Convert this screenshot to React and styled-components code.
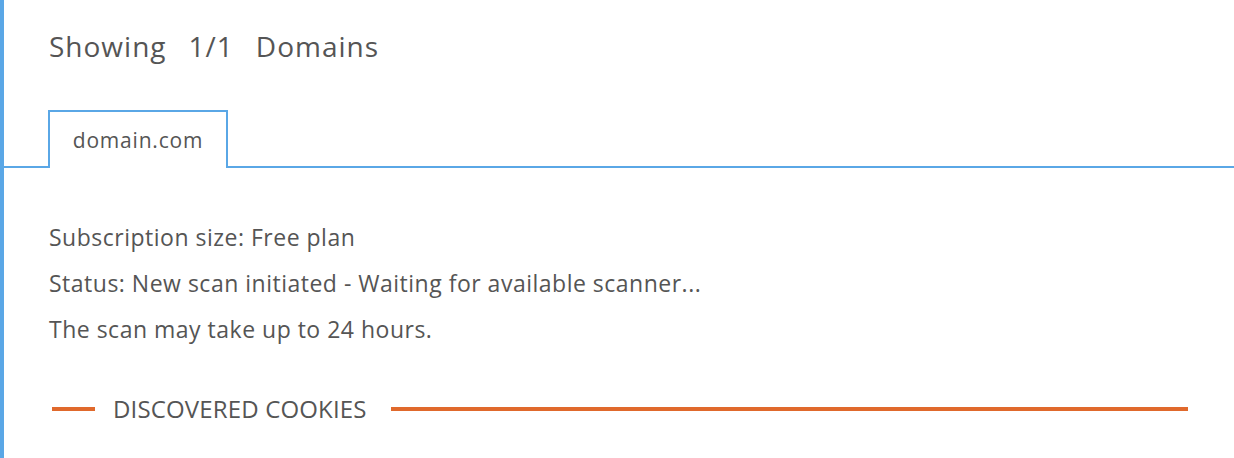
import React from 'react'
import styled, { createGlobalStyle } from 'styled-components'

const colors = {
  blue: '#5aa7e6',
  orange: '#e0692c',
  text: '#555555',
}

const GlobalStyle = createGlobalStyle`
  html, body {
    margin: 0;
    padding: 0;
    background: #ffffff;
  }
  body {
    font-family: 'Open Sans', 'Noto Sans', sans-serif;
    color: ${colors.text};
  }
`

const Page = styled.div`
  border-left: 4px solid ${colors.blue};
  min-height: 458px;
  box-sizing: border-box;
`

const Heading = styled.h2`
  margin: 0;
  padding: 25px 0 0 45px;
  font-size: 28px;
  font-weight: 400;
  letter-spacing: 1px;
  line-height: 42px;
  display: flex;
  gap: 22px;
`

const TabBar = styled.div`
  display: flex;
  margin-top: 43px;
  padding-left: 44px;
  border-bottom: 2px solid ${colors.blue};
`

const Tab = styled.div`
  width: 180px;
  height: 58px;
  box-sizing: border-box;
  border: 2px solid ${colors.blue};
  border-bottom: none;
  margin-bottom: -2px;
  background: #fff;
  display: flex;
  align-items: center;
  justify-content: center;
  font-size: 21px;
  letter-spacing: 0.8px;
`

const Details = styled.div`
  padding: 46px 0 0 45px;
  display: flex;
  flex-direction: column;
`

const Line = styled.p`
  margin: 0;
  font-size: 23px;
  letter-spacing: 0.5px;
  line-height: 46px;
`

const Divider = styled.div`
  display: flex;
  align-items: center;
  margin: 40px 46px 0 48px;
`

const Rule = styled.span`
  height: 4px;
  background: ${colors.orange};
  flex: ${(p) => (p.$grow ? 1 : 'none')};
  width: ${(p) => (p.$grow ? 'auto' : '43px')};
`

const DividerLabel = styled.span`
  font-size: 24px;
  letter-spacing: 0.15px;
  text-transform: uppercase;
  padding: 0 24px 0 18px;
  line-height: 34px;
`

export default function App() {
  return (
    <>
      <GlobalStyle />
      <Page>
        <Heading>
          <span>Showing</span>
          <span>1/1</span>
          <span>Domains</span>
        </Heading>
        <TabBar>
          <Tab>domain.com</Tab>
        </TabBar>
        <Details>
          <Line>Subscription size: Free plan</Line>
          <Line>Status: New scan initiated - Waiting for available scanner...</Line>
          <Line>The scan may take up to 24 hours.</Line>
        </Details>
        <Divider>
          <Rule />
          <DividerLabel>Discovered cookies</DividerLabel>
          <Rule $grow />
        </Divider>
      </Page>
    </>
  )
}
